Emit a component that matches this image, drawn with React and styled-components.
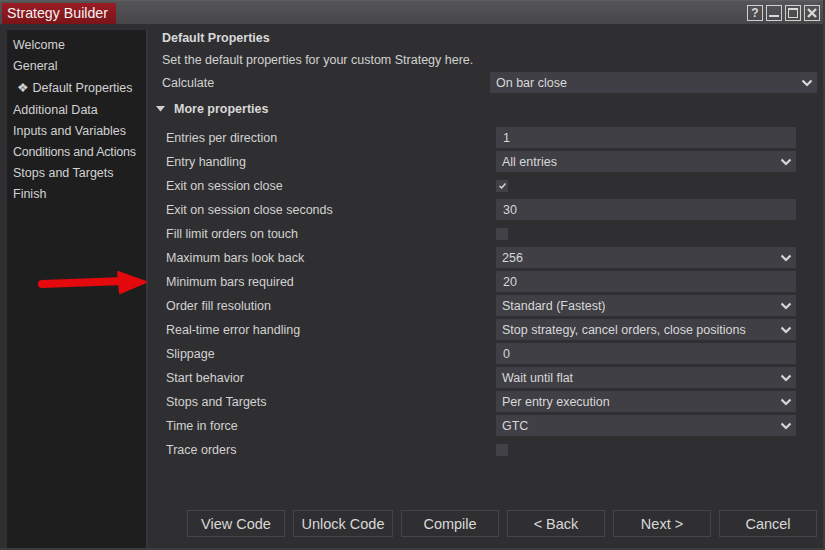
import React from "react";
import styled, { createGlobalStyle } from "styled-components";

const Global = createGlobalStyle`
  html, body { margin: 0; padding: 0; background: #2f2f31; }
  body { font-family: "Liberation Sans", Arial, sans-serif; }
`;

const Window = styled.div`
  position: relative;
  width: 825px;
  height: 550px;
  box-sizing: border-box;
  background: #2f2f31;
  border-right: 2px solid #3c3c3e;
  border-bottom: 2px solid #3c3c3e;
  display: flex;
  flex-direction: column;
  overflow: hidden;
`;

const TitleBar = styled.div`
  height: 24px;
  flex: none;
  display: flex;
  align-items: center;
  justify-content: space-between;
  background: linear-gradient(#555557, #47474a);
  border-top: 1px solid #5e5e60;
  box-sizing: border-box;
  padding: 0 3px 0 2px;
`;

const TitleTab = styled.div`
  height: 21px;
  width: 114px;
  box-sizing: border-box;
  padding: 0 0 0 5px;
  display: flex;
  align-items: center;
  background: linear-gradient(#9a1c24, #7a1419);
  color: #f2f2f2;
  font-size: 14.2px;
  margin-top: 1px;
  white-space: nowrap;
`;

const Controls = styled.div`
  display: flex;
  gap: 3px;
`;

const CtrlBox = styled.div`
  width: 14px;
  height: 14px;
  border: 1px solid #cfcfcf;
  display: flex;
  align-items: center;
  justify-content: center;
  color: #d8d8d8;
  font-size: 12px;
  font-weight: bold;
`;

const Body = styled.div`
  flex: 1;
  display: flex;
  min-height: 0;
`;

const Sidebar = styled.div`
  width: 141px;
  margin: 6px 0 0 7px;
  background: #1e1e1f;
  border-right: 2px solid #363638;
  padding-top: 5px;
  box-sizing: border-box;
`;

const NavItem = styled.div`
  height: 21px;
  line-height: 21px;
  font-size: 12.5px;
  color: #d2d2d2;
  padding-left: ${(p) => (p.$sub ? 4 : 6)}px;
  white-space: nowrap;
  letter-spacing: ${(p) => (p.$tight ? "-0.2px" : "0")};
  ${(p) => p.$sub && "height: 24px; line-height: 24px; margin-top: -1px;"}
`;

const Main = styled.div`
  flex: 1;
  display: flex;
  flex-direction: column;
  padding: 5px 6px 0 14px;
  min-width: 0;
`;

const Heading = styled.div`
  height: 19px;
  line-height: 19px;
  font-size: 12.5px;
  font-weight: bold;
  color: #d8d8d8;
`;

const Desc = styled.div`
  height: 22px;
  line-height: 24px;
  font-size: 12.5px;
  color: #d2d2d2;
`;

const CalcRow = styled.div`
  display: flex;
  align-items: center;
  justify-content: space-between;
  margin-top: 2px;
  height: 21px;
`;

const Label = styled.div`
  font-size: 12.5px;
  color: #d2d2d2;
  white-space: nowrap;
`;

const Field = styled.div`
  width: ${(p) => p.$w}px;
  height: 21px;
  box-sizing: border-box;
  background: #3f3f45;
  display: flex;
  align-items: center;
  justify-content: space-between;
  padding: 0 4px 0 ${(p) => (p.$select ? 6 : 7)}px;
  font-size: 12.5px;
  color: #d8d8d8;
`;

const Section = styled.div`
  height: 27px;
  display: flex;
  align-items: center;
  gap: 9px;
  margin: 2px 0 0 -6px;
  font-size: 12.5px;
  font-weight: bold;
  color: #d8d8d8;
`;

const PropList = styled.div`
  display: flex;
  flex-direction: column;
  gap: 3px;
  padding: 5px 0 0 4px;
`;

const PropRow = styled.div`
  display: flex;
  align-items: center;
  height: 21px;
`;

const PropLabel = styled(Label)`
  width: 330px;
`;

const Check = styled.div`
  width: 12px;
  height: 12px;
  background: #414147;
  display: flex;
  align-items: center;
  justify-content: center;
`;

const Footer = styled.div`
  margin-top: auto;
  display: flex;
  justify-content: flex-end;
  gap: 8px;
  padding: 0 0 11px 0;
`;

const Button = styled.button`
  width: ${(p) => p.$w || 98}px;
  height: 27px;
  background: #2f2f31;
  border: 1px solid #454548;
  color: #d8d8d8;
  font-family: "Liberation Sans", Arial, sans-serif;
  font-size: 14.5px;
  padding: 0;
`;

const ArrowWrap = styled.svg`
  position: absolute;
  left: 38px;
  top: 270px;
`;

const Chevron = () => (
  <svg width="12" height="10" viewBox="0 0 12 10">
    <path d="M1.5 2.5 L6 7 L10.5 2.5" fill="none" stroke="#d8d8d8" strokeWidth="2.2" />
  </svg>
);

const CheckMark = () => (
  <svg width="9" height="8" viewBox="0 0 9 8">
    <path d="M1.5 4 L3.6 6 L7.5 1.5" fill="none" stroke="#d8d8d8" strokeWidth="1.5" />
  </svg>
);

const props = [
  ["Entries per direction", "text", "1"],
  ["Entry handling", "select", "All entries"],
  ["Exit on session close", "check", true],
  ["Exit on session close seconds", "text", "30"],
  ["Fill limit orders on touch", "check", false],
  ["Maximum bars look back", "select", "256"],
  ["Minimum bars required", "text", "20"],
  ["Order fill resolution", "select", "Standard (Fastest)"],
  ["Real-time error handling", "select", "Stop strategy, cancel orders, close positions"],
  ["Slippage", "text", "0"],
  ["Start behavior", "select", "Wait until flat"],
  ["Stops and Targets", "select", "Per entry execution"],
  ["Time in force", "select", "GTC"],
  ["Trace orders", "check", false],
];

const nav = [
  { t: "Welcome" },
  { t: "General" },
  { t: "❖ Default Properties", sub: true },
  { t: "Additional Data" },
  { t: "Inputs and Variables" },
  { t: "Conditions and Actions", tight: true },
  { t: "Stops and Targets" },
  { t: "Finish" },
];

export default function App() {
  return (
    <>
      <Global />
      <Window>
        <TitleBar>
          <TitleTab>Strategy Builder</TitleTab>
          <Controls>
            <CtrlBox>?</CtrlBox>
            <CtrlBox>
              <svg width="10" height="10" viewBox="0 0 10 10">
                <rect x="0" y="7" width="10" height="2" fill="#d8d8d8" />
              </svg>
            </CtrlBox>
            <CtrlBox>
              <svg width="10" height="10" viewBox="0 0 10 10">
                <rect x="0.5" y="0.5" width="9" height="9" fill="none" stroke="#d8d8d8" />
                <rect x="0" y="0" width="10" height="2" fill="#d8d8d8" />
              </svg>
            </CtrlBox>
            <CtrlBox>
              <svg width="10" height="10" viewBox="0 0 10 10">
                <path d="M1 1 L9 9 M9 1 L1 9" stroke="#d8d8d8" strokeWidth="2.4" />
              </svg>
            </CtrlBox>
          </Controls>
        </TitleBar>
        <Body>
          <Sidebar>
            {nav.map((n) => (
              <NavItem key={n.t} $sub={n.sub} $tight={n.tight}>
                {n.sub ? <span style={{ paddingLeft: 6 }}>{n.t}</span> : n.t}
              </NavItem>
            ))}
          </Sidebar>
          <Main>
            <Heading>Default Properties</Heading>
            <Desc>Set the default properties for your custom Strategy here.</Desc>
            <CalcRow>
              <Label>Calculate</Label>
              <Field $w={327} $select>
                On bar close
                <Chevron />
              </Field>
            </CalcRow>
            <Section>
              <svg width="9" height="6" viewBox="0 0 9 6">
                <path d="M0 0 L9 0 L4.5 5.5 Z" fill="#d0d0d0" />
              </svg>
              More properties
            </Section>
            <PropList>
              {props.map(([label, kind, val]) => (
                <PropRow key={label}>
                  <PropLabel>{label}</PropLabel>
                  {kind === "check" ? (
                    <Check>{val && <CheckMark />}</Check>
                  ) : (
                    <Field $w={300} $select={kind === "select"}>
                      {val}
                      {kind === "select" && <Chevron />}
                    </Field>
                  )}
                </PropRow>
              ))}
            </PropList>
            <Footer>
              <Button>View Code</Button>
              <Button $w={100}>Unlock Code</Button>
              <Button>Compile</Button>
              <Button>&lt; Back</Button>
              <Button>Next &gt;</Button>
              <Button>Cancel</Button>
            </Footer>
          </Main>
        </Body>
        <ArrowWrap width="112" height="26" viewBox="0 0 112 26">
          <path d="M4 14 L86 11" stroke="#e3090d" strokeWidth="8" strokeLinecap="round" />
          <path d="M80 2 L108 12 L82 23 Z" fill="#e3090d" stroke="#e3090d" strokeWidth="2" strokeLinejoin="round" />
        </ArrowWrap>
      </Window>
    </>
  );
}
